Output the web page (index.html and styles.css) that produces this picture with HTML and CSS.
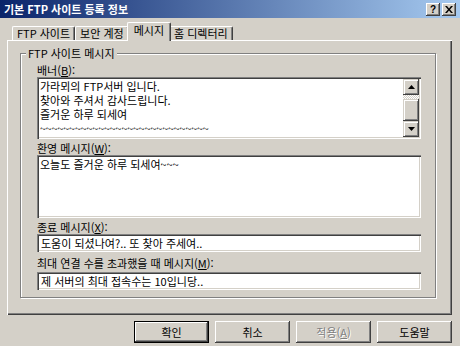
FILE: index.html
```html
<!DOCTYPE html>
<html lang="ko">

<head>
    <meta charset="UTF-8">
    <title>기본 FTP 사이트 등록 정보</title>
    <link rel="stylesheet" href="styles.css">
</head>

<body>
    <div class="dialog">
        <div class="titlebar">
            <span class="title">기본 FTP 사이트 등록 정보</span>
            <div class="title-buttons">
                <button class="title-btn">?</button>
                <button class="title-btn">
                    <svg width="8" height="7" viewBox="0 0 8 7">
                        <path d="M0 0h2l2 2.5L6 0h2L5 3.5 8 7H6L4 4.5 2 7H0l3-3.5z" fill="#000" />
                    </svg>
                </button>
            </div>
        </div>

        <div class="content">
            <div class="tabs">
                <div class="tab">FTP 사이트</div>
                <div class="tab">보안 계정</div>
                <div class="tab active">메시지</div>
                <div class="tab">홈 디렉터리</div>
            </div>

            <div class="panel">
                <fieldset class="group">
                    <legend>FTP 사이트 메시지</legend>

                    <label class="label">배너(<u>B</u>):</label>
                    <div class="field multi banner">
                        <div class="field-text">
                            <div class="line">가라뫼의 FTP서버 입니다.</div>
                            <div class="line">찾아와 주셔서 감사드립니다.</div>
                            <div class="line">즐거운 하루 되세여</div>
                            <div class="line tilde">~~~~~~~~~~~~~~~~~~~~~~~~~~~~~</div>
                        </div>
                        <div class="scrollbar">
                            <div class="sb-btn">
                                <svg width="7" height="4" viewBox="0 0 7 4"><path d="M3.5 0L7 4H0z" fill="#000" /></svg>
                            </div>
                            <div class="sb-track"></div>
                            <div class="sb-thumb"></div>
                            <div class="sb-btn">
                                <svg width="7" height="4" viewBox="0 0 7 4"><path d="M0 0h7L3.5 4z" fill="#000" /></svg>
                            </div>
                        </div>
                    </div>

                    <label class="label">환영 메시지(<u>W</u>):</label>
                    <div class="field multi welcome">
                        <div class="field-text">
                            <div class="line">오늘도 즐거운 하루 되세여~~~</div>
                        </div>
                    </div>

                    <label class="label">종료 메시지(<u>X</u>):</label>
                    <div class="field single">도움이 되셨나여?.. 또 찾아 주세여..</div>

                    <label class="label max">최대 연결 수를 초과했을 때 메시지(<u>M</u>):</label>
                    <div class="field single">제 서버의 최대 접속수는 10입니당..</div>
                </fieldset>
            </div>

            <div class="buttons">
                <button class="btn default">확인</button>
                <button class="btn">취소</button>
                <button class="btn" disabled>적용(<u>A</u>)</button>
                <button class="btn">도움말</button>
            </div>
        </div>
    </div>
</body>

</html>
```

FILE: styles.css
```css
* {
    box-sizing: border-box;
}

body {
    margin: 0;
    width: 460px;
    height: 346px;
    overflow: hidden;
    background: #d4d0c8;
    font-family: 'Noto Sans CJK KR', 'Noto Sans', sans-serif;
    font-size: 11px;
    line-height: 14px;
    color: #000;
}

.dialog {
    display: flex;
    flex-direction: column;
    height: 346px;
}

/* title bar */
.titlebar {
    height: 18px;
    display: flex;
    align-items: center;
    justify-content: space-between;
    padding: 0 4px;
    background: linear-gradient(to right, #0a246a, #a6caf0);
    color: #fff;
    font-weight: bold;
}

.title-buttons {
    display: flex;
    gap: 2px;
}

.title-btn {
    width: 14px;
    height: 13px;
    padding: 0;
    margin: 0;
    border: none;
    background: #d4d0c8;
    box-shadow: inset -1px -1px #404040, inset 1px 1px #fff, inset -2px -2px #808080;
    font: bold 10px/11px 'Liberation Sans', sans-serif;
    color: #000;
    display: flex;
    align-items: center;
    justify-content: center;
}

/* body */
.content {
    padding: 4px 8px 0 7px;
}

.tabs {
    display: flex;
    align-items: flex-end;
    height: 18px;
    padding-left: 5px;
}

.tab {
    height: 14px;
    padding: 0 4px;
    border-left: 1px solid #fff;
    border-top: 1px solid #fff;
    border-right: 1px solid #404040;
    border-radius: 2px 2px 0 0;
    box-shadow: inset -1px 0 #808080;
    line-height: 13px;
    white-space: nowrap;
}

.tab.active {
    position: relative;
    z-index: 1;
    height: 19px;
    margin: 0 -2px -1px;
    padding: 0 6px;
    background: #d4d0c8;
    line-height: 15px;
}

.panel {
    height: 275px;
    padding: 6px 16px 0 13px;
    box-shadow: inset 1px 1px #fff, inset -1px -1px #404040, inset -2px -2px #808080;
}

.group {
    margin: 0;
    padding: 3px 14px 7px 16px;
    border: 1px solid #808080;
    box-shadow: inset 1px 1px #fff, 1px 1px #fff;
}

.group legend {
    padding: 0 2px;
    margin-left: -11px;
    background: #d4d0c8;
}

.label {
    display: block;
    height: 14px;
    margin-top: 2px;
}

.label:first-of-type {
    margin-top: 0;
}

.label.max {
    margin-top: 4px;
    margin-bottom: 2px;
}

/* sunken fields */
.field {
    background: #fff;
    box-shadow: inset 1px 1px #808080, inset 2px 2px #404040, inset -1px -1px #fff, inset -2px -2px #d4d0c8;
    white-space: nowrap;
    overflow: hidden;
}

.multi {
    display: flex;
    padding: 2px;
}

.banner {
    height: 62px;
}

.welcome {
    height: 63px;
}

.field-text {
    flex: 1;
    padding-left: 1px;
    overflow: hidden;
}

.line {
    height: 14px;
    overflow: hidden;
}

.tilde {
    color: #202020;
    letter-spacing: -0.3px;
}

.single {
    height: 18px;
    padding: 2px 4px;
}

.scrollbar {
    width: 16px;
    display: flex;
    flex-direction: column;
}

.sb-btn,
.sb-thumb {
    background: #d4d0c8;
    box-shadow: inset -1px -1px #404040, inset 1px 1px #d4d0c8, inset 2px 2px #fff, inset -2px -2px #808080;
}

.sb-btn {
    height: 16px;
    display: flex;
    align-items: center;
    justify-content: center;
}

.sb-track {
    height: 4px;
    background: repeating-conic-gradient(#fff 0 25%, #d4d0c8 0 50%) 0 0 / 2px 2px;
}

.sb-thumb {
    flex: 1;
}

/* bottom buttons */
.buttons {
    display: flex;
    justify-content: flex-end;
    gap: 6px;
    margin-top: 6px;
}

.btn {
    width: 75px;
    height: 22px;
    margin: 0;
    padding: 0;
    border: none;
    background: #d4d0c8;
    box-shadow: inset -1px -1px #404040, inset 1px 1px #fff, inset -2px -2px #808080;
    font: inherit;
    color: #000;
}

.btn.default {
    border: 1px solid #000;
}

.btn:disabled {
    color: #808080;
    text-shadow: 1px 1px #fff;
}
```
